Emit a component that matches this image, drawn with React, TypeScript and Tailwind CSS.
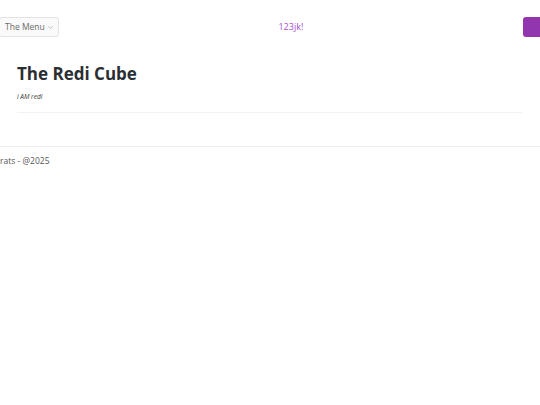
import { ChevronDown } from "lucide-react";

export default function App() {
  return (
    <div className="w-[540px] h-[405px] overflow-hidden bg-white font-['Open_Sans',sans-serif]">
      <div className="w-[581px] -ml-[1px]">
        {/* top bar */}
        <header className="mt-[17px] flex h-[20px] items-center justify-between">
          <button
            type="button"
            className="flex h-[20px] items-center gap-[2px] whitespace-nowrap rounded-[3px] border border-[#e3e3e3] bg-[#fafafa] pl-[5px] pr-[4px] text-[8.5px] text-[#6b6b6b]"
          >
            The Menu
            <ChevronDown className="size-[7px]" strokeWidth={1.5} />
          </button>
          <span className="text-[9px] text-[#a64fcf]">123jk!</span>
          <button type="button" className="h-[20px] w-[57px] rounded-[3px] bg-[#9236b0]" />
        </header>
      </div>

      <main className="px-[17px] pt-[26px]">
        <h1 className="text-[17px] font-bold leading-[22px] text-[#2b2e33]">The Redi Cube</h1>
        <p className="mt-[7px] text-[6.5px] italic leading-[10px] text-[#333]">i AM redi</p>
        <div className="mt-[10px] mr-[1px] border-t border-[#f2f2f2]" />
      </main>

      <footer className="mt-[33px] border-t border-[#efefef] pt-[8px]">
        <p className="text-[8.5px] leading-[12px] text-[#555]">rats - @2025</p>
      </footer>
    </div>
  );
}
